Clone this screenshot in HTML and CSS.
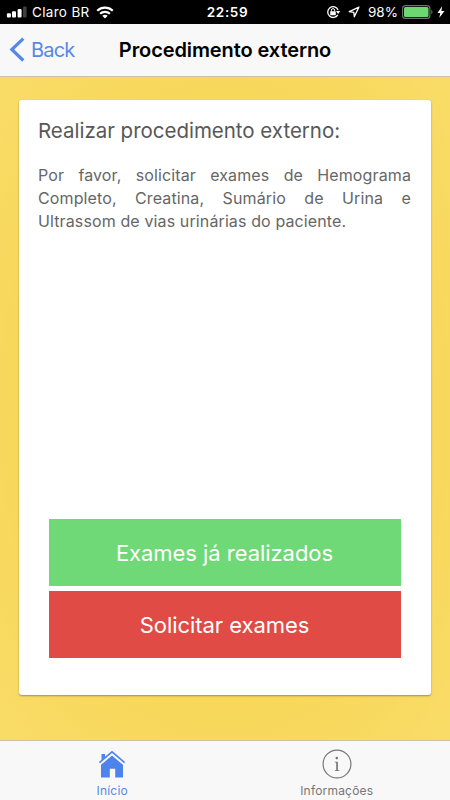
FILE: index.html
```html
<!DOCTYPE html>
<html lang="pt-BR">
<head>
<meta charset="utf-8">
<title>Procedimento externo</title>
<link rel="stylesheet" href="styles.css">
</head>
<body>
<div class="status">
  <div class="status-left">
    <svg class="signal" width="21" height="12" viewBox="0 0 21 12"><rect x="0.9" y="7.3" width="4" height="4.2" rx="1" fill="#fff"/><rect x="6" y="5.3" width="4" height="6.2" rx="1" fill="#fff"/><rect x="11.6" y="3" width="4" height="8.5" rx="1" fill="#fff"/><rect x="17" y="0.5" width="3.6" height="11" rx="1" fill="#404040"/></svg>
    <span class="carrier">Claro BR</span>
    <svg class="wifi" width="18" height="13" viewBox="0 0 18 13"><g fill="none" stroke="#fff" stroke-width="2.2"><path d="M1.2 4.8C5.6 .6 12.4 .6 16.8 4.8"/><path d="M4.1 7.8C6.8 5.2 11.2 5.2 13.9 7.8"/></g><path fill="#fff" d="M6.3 9.7Q9 7.7 11.7 9.7L9 12.5Z"/></svg>
  </div>
  <span class="clock">22:59</span>
  <div class="status-right">
    <svg class="lock" width="15" height="14" viewBox="0 0 15 14"><path d="M11.8 9.8A5.4 5.4 0 1 1 12.1 5" fill="none" stroke="#fff" stroke-width="1.3"/><path d="M9.9 6h4.4l-2.2 3z" fill="#fff"/><rect x="4.2" y="6.2" width="5.6" height="4.1" rx=".5" fill="#fff"/><path d="M5.4 6.5V5.2a1.6 1.6 0 0 1 3.2 0v1.3" fill="none" stroke="#fff" stroke-width="1"/></svg>
    <svg class="arrow" width="12" height="12" viewBox="0 0 12 12"><path d="M10.9 1.1L1.2 5.6l4.6.7.5 4.5z" fill="none" stroke="#fff" stroke-width="1.3" stroke-linejoin="round"/></svg>
    <span class="percent">98%</span>
    <svg class="battery" width="32" height="14" viewBox="0 0 32 14"><rect x=".6" y=".6" width="27.3" height="12.8" rx="3" fill="none" stroke="#727272" stroke-width="1.1"/><rect x="2" y="2" width="24.5" height="10" rx="1.6" fill="#6dd871"/><path d="M29.4 4.6q2.2 2.4 0 4.8z" fill="#777"/></svg>
    <svg class="bolt" width="8" height="12" viewBox="0 0 8 12"><path d="M5.1 .3L.5 6.9h2.8L2.3 11.7 7.5 5H4.4z" fill="#fff"/></svg>
  </div>
</div>
<header class="nav">
  <div class="back">
    <svg width="17" height="26" viewBox="0 0 17 26"><path d="M15.3 1.6L3.8 12.5l11.5 11" fill="none" stroke="#5788e6" stroke-width="3.2"/></svg>
    <span class="back-text">Back</span>
  </div>
  <h1 class="title">Procedimento externo</h1>
</header>
<main class="content">
  <section class="card">
    <h2 class="heading">Realizar procedimento externo:</h2>
    <p class="body">Por favor, solicitar exames de Hemograma Completo, Creatina, Sumário de Urina e Ultrassom de vias urinárias do paciente.</p>
    <div class="actions">
      <button class="btn btn-done">Exames já realizados</button>
      <button class="btn btn-request">Solicitar exames</button>
    </div>
  </section>
</main>
<footer class="tabs">
  <div class="tab tab-active">
    <svg width="30" height="30" viewBox="0 0 30 30"><path fill="#4f83ec" d="M4.5 5h3.6v4.2L4.5 12.3z"/><path fill="#4f83ec" d="M15 6.6L26 15.8V28.5H18.2V19.8H12.8V28.5H4V15.8z"/><path d="M2.4 14.8L15 4.2l12.6 10.6" fill="none" stroke="#f8f8f8" stroke-width="2.8"/><path d="M2.4 13.6L15 2.9l12.6 10.7" fill="none" stroke="#4f83ec" stroke-width="1.6"/></svg>
    <span class="tab-text">Início</span>
  </div>
  <div class="tab">
    <svg width="30" height="30" viewBox="0 0 30 30"><circle cx="15" cy="15" r="13.9" fill="none" stroke="#777" stroke-width="1.2"/><circle cx="14.8" cy="9.1" r="1.3" fill="#777"/><path d="M12.7 12.7h3.2v8.5h1.6v.8h-4.8v-.8h1.5v-7.7h-1.5z" fill="#777"/></svg>
    <span class="tab-text">Informações</span>
  </div>
</footer>
</body>
</html>
```
FILE: styles.css
```css
* { box-sizing: border-box; }
body {
  margin: 0;
  width: 450px;
  height: 800px;
  overflow: hidden;
  display: flex;
  flex-direction: column;
  font-family: Inter, "Liberation Sans", sans-serif;
  background: #f8f8f8;
}
svg { display: block; flex: none; }
.status {
  flex: none;
  height: 24px;
  background: #000;
  color: #fff;
  display: grid;
  grid-template-columns: 1fr auto 1fr;
  align-items: center;
  font-size: 13.5px;
  line-height: 24px;
}
.status-left, .status-right { display: flex; align-items: center; }
.status-left { padding-left: 6px; }
.status-right { justify-content: flex-end; padding-right: 5px; }
.carrier { margin-left: 5px; width: 58px; white-space: nowrap; letter-spacing: .32px; }
.wifi { margin-left: 6px; }
.clock { font-weight: 600; letter-spacing: .6px; padding-left: 5px; }
.arrow { margin-left: 7px; }
.percent { margin-left: 8px; width: 30px; white-space: nowrap; }
.battery { margin-left: 4px; }
.bolt { margin-left: 3px; }
.nav {
  flex: none;
  height: 53px;
  background: #f8f8f8;
  border-bottom: 1px solid #c9c3a4;
  display: grid;
  grid-template-columns: 1fr auto 1fr;
  align-items: center;
}
.back { display: flex; align-items: center; padding-left: 8px; color: #5788e6; font-size: 20px; }
.back-text { margin-left: 6px; letter-spacing: -.8px; }
.title { margin: 0; font-size: 20px; font-weight: 600; color: #000; white-space: nowrap; letter-spacing: -.1px; }
.content {
  flex: 1;
  padding: 23px 19px 45px;
  background: radial-gradient(ellipse at center, #f8d655 0%, #f8d655 52%, #f9dc68 100%);
  display: flex;
}
.card {
  flex: 1;
  background: #fff;
  border-radius: 3px;
  box-shadow: 0 1px 2px rgba(0,0,0,.35);
  padding: 18px 20px 37px 19px;
  display: flex;
  flex-direction: column;
}
.heading { margin: 0; font-size: 20.5px; font-weight: 400; line-height: 26px; color: #585858; white-space: nowrap; letter-spacing: -.02px; }
.body {
  margin: 20px 0 0;
  font-size: 16px;
  line-height: 23px;
  color: #666;
  text-align: justify;
  letter-spacing: .12px;
}
.actions { margin: auto 10px 0 11px; display: flex; flex-direction: column; gap: 5px; }
.btn {
  display: block;
  height: 67px;
  border: 0;
  padding: 0 1px 0 0;
  font-family: inherit;
  font-size: 22px;
  letter-spacing: -.05px;
  color: #fff;
}
.btn-done { background: #6fd978; }
.btn-request { background: #e04b45; }
.tabs {
  flex: none;
  height: 60px;
  background: #f8f8f8;
  border-top: 1px solid #c9c3a4;
  display: grid;
  grid-template-columns: 1fr 1fr;
  padding-right: 1px;
}
.tab { display: flex; flex-direction: column; align-items: center; padding-top: 8px; color: #777; font-size: 12px; }
.tab-active { color: #5788e6; }
.tab-text { margin-top: 5px; line-height: 14px; letter-spacing: .2px; }
```
